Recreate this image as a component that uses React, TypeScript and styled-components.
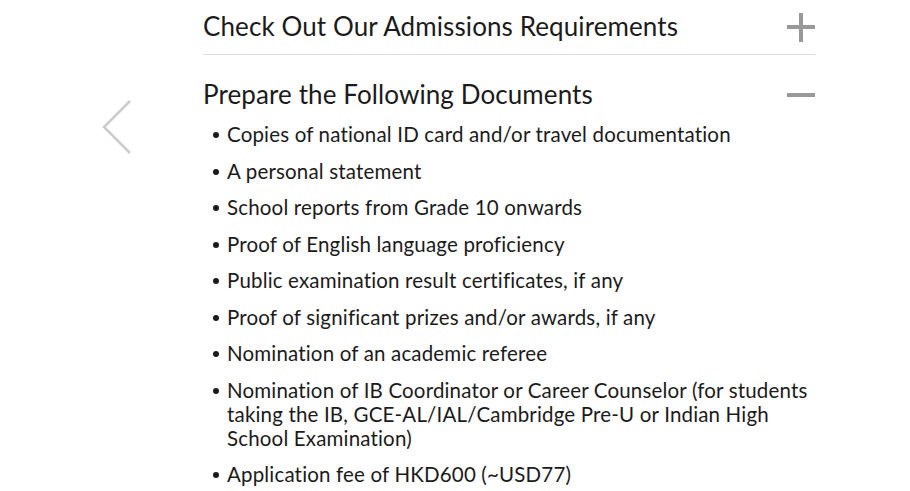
import styled, { createGlobalStyle } from "styled-components";

const GlobalStyle = createGlobalStyle`
  html, body {
    margin: 0;
    padding: 0;
    background: #ffffff;
  }
  body {
    font-family: Lato, "Liberation Sans", sans-serif;
    color: #1b1b1b;
  }
`;

const documents = [
  "Copies of national ID card and/or travel documentation",
  "A personal statement",
  "School reports from Grade 10 onwards",
  "Proof of English language proficiency",
  "Public examination result certificates, if any",
  "Proof of significant prizes and/or awards, if any",
  "Nomination of an academic referee",
  "Nomination of IB Coordinator or Career Counselor (for students taking the IB, GCE-AL/IAL/Cambridge Pre-U or Indian High School Examination)",
  "Application fee of HKD600 (~USD77)",
];

export default function App() {
  return (
    <>
      <GlobalStyle />
      <Page>
        <NavColumn>
          <PrevButton aria-label="Previous">
            <svg width="32" height="58" viewBox="0 0 32 58">
              <polyline
                points="29,2 3,28 29,54"
                fill="none"
                stroke="#cccccc"
                strokeWidth="2.5"
              />
            </svg>
          </PrevButton>
        </NavColumn>
        <Accordion>
          <Section>
            <Header>
              <Title>Check Out Our Admissions Requirements</Title>
              <Toggle open={false} />
            </Header>
          </Section>
          <Section open>
            <Header>
              <Title>Prepare the Following Documents</Title>
              <Toggle open />
            </Header>
            <List>
              {documents.map((d) => (
                <Item key={d}>{d}</Item>
              ))}
            </List>
          </Section>
        </Accordion>
      </Page>
    </>
  );
}

const Toggle = ({ open }: { open: boolean }) => (
  <ToggleIcon>
    <HBar />
    {!open && <VBar />}
  </ToggleIcon>
);

const Page = styled.div`
  width: 910px;
  height: 491px;
  overflow: hidden;
  display: grid;
  grid-template-columns: 203px 612px 1fr;
`;

const NavColumn = styled.div`
  display: flex;
  align-items: flex-start;
  padding: 99px 0 0 101px;
`;

const PrevButton = styled.div`
  display: flex;
  width: 32px;
  height: 58px;
`;

const Accordion = styled.div`
  display: flex;
  flex-direction: column;
`;

const Section = styled.div<{ open?: boolean }>`
  border-bottom: ${(p) => (p.open ? "none" : "1px solid #dcdcdc")};
  padding-top: ${(p) => (p.open ? "13px" : "0")};
`;

const Header = styled.div`
  height: 54px;
  box-sizing: border-box;
  padding-bottom: 3px;
  display: flex;
  align-items: center;
  justify-content: space-between;
`;

const Title = styled.h3`
  margin: 0;
  font-size: 26px;
  font-weight: 400;
  letter-spacing: 0.1px;
  color: #1b1b1b;
`;

const ToggleIcon = styled.div`
  position: relative;
  width: 28px;
  height: 29px;
  flex-shrink: 0;
  margin-top: 3px;
`;

const HBar = styled.span`
  position: absolute;
  left: 0;
  top: 12px;
  width: 28px;
  height: 4px;
  background: #999999;
`;

const VBar = styled.span`
  position: absolute;
  left: 12px;
  top: 0;
  width: 4px;
  height: 29px;
  background: #999999;
`;

const List = styled.ul`
  margin: 0;
  padding: 0 0 0 24px;
  list-style: none;
`;

const Item = styled.li`
  position: relative;
  font-size: 20.5px;
  line-height: 24px;
  letter-spacing: 0.17px;
  margin-bottom: 12.5px;

  &::before {
    content: "";
    position: absolute;
    left: -14px;
    top: 10px;
    width: 6px;
    height: 6px;
    border-radius: 50%;
    background: #1b1b1b;
  }
`;
